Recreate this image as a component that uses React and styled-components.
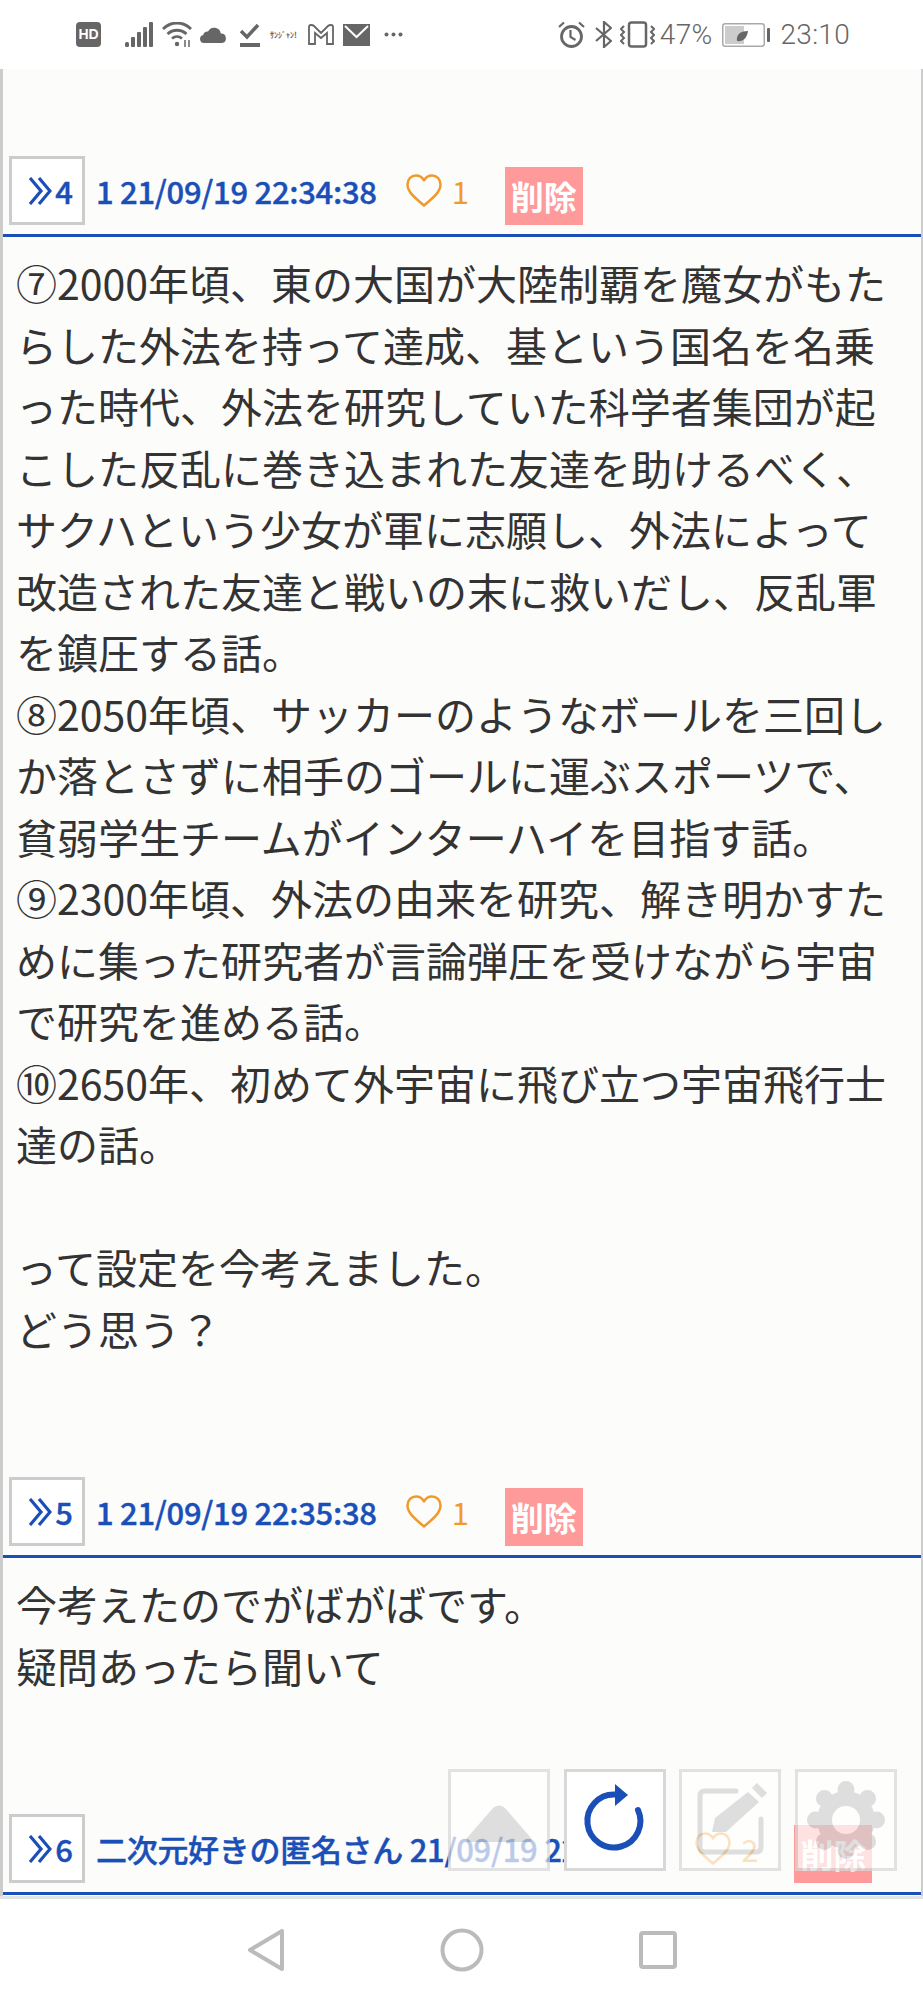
import React from "react";
import styled, { createGlobalStyle } from "styled-components";

const Blue = "#1a4fb8";
const Orange = "#f09a2c";
const Grey = "#d2d2d2";
const StatusInk = "#666";

const Global = createGlobalStyle`
  html, body { margin: 0; padding: 0; background: #fff; }
  * { box-sizing: border-box; }
`;

const Phone = styled.div`
  width: 923px;
  height: 2000px;
  display: flex;
  flex-direction: column;
  overflow: hidden;
  background: #fff;
  font-family: "Noto Sans CJK JP", "Noto Sans", sans-serif;
`;

const StatusBar = styled.div`
  height: 69px;
  flex: none;
  display: flex;
  align-items: center;
  justify-content: space-between;
  padding: 0 73px 0 76px;
  color: ${StatusInk};
`;

const StatusGroup = styled.div`
  display: flex;
  align-items: center;
`;

const StatusText = styled.span`
  margin-left: ${(p) => p.$ml || 0}px;
  font-family: Roboto, "Liberation Sans", sans-serif;
  font-weight: 300;
  font-size: 28px;
  line-height: 34px;
  letter-spacing: 0.3px;
`;

const TinyText = styled.span`
  width: 30px;
  margin-left: 10px;
  font-family: "Noto Sans CJK JP", sans-serif;
  font-size: 8px;
  font-weight: 700;
  white-space: nowrap;
  overflow: hidden;
`;

const HdBadge = styled.span`
  width: 25px;
  height: 25px;
  margin-right: 24px;
  border-radius: 4px;
  background: ${StatusInk};
  color: #fff;
  font-family: "Liberation Sans", sans-serif;
  font-size: 14px;
  font-weight: 700;
  line-height: 25px;
  text-align: center;
`;

const StatusSvg = styled.svg`
  flex: none;
  margin-left: ${(p) => p.$ml || 0}px;
`;

const Screen = styled.div`
  position: relative;
  flex: none;
  height: 1827px;
  overflow: hidden;
  padding-top: 87px;
  background: #fcfcfb;
  border-left: 3px solid #ccc;
  border-right: 2px solid #ccc;
`;

const PostHead = styled.div`
  height: 81px;
  display: flex;
  align-items: flex-start;
  padding-left: 6px;
  border-bottom: 3px solid ${Blue};
  white-space: nowrap;
  overflow: hidden;
`;

const AnchorBox = styled.div`
  width: 76px;
  height: 69px;
  flex: none;
  display: flex;
  align-items: center;
  justify-content: center;
  padding-left: 8px;
  border: 3px solid #ccc;
  background: #fff;
  color: ${Blue};
  font-size: 31px;
  font-weight: 500;
  -webkit-text-stroke: 0.4px ${Blue};
`;

const Chevrons = styled.svg`
  flex: none;
  margin-right: 3px;
`;

const Author = styled.span`
  margin-left: 11px;
  color: ${Blue};
  font-size: 31px;
  font-weight: 500;
  line-height: 69px;
  letter-spacing: -0.3px;
  -webkit-text-stroke: 0.4px ${Blue};
`;

const Like = styled.span`
  display: flex;
  align-items: center;
  height: 69px;
  margin-left: 29px;
  color: ${Orange};
  font-size: 31px;
  gap: 10px;
`;

const DeleteBadge = styled.span`
  width: 78px;
  height: 58px;
  margin: 11px 0 0 36px;
  flex: none;
  background: #fe9a9a;
  color: #fff;
  font-size: 33px;
  font-weight: 700;
  line-height: 58px;
  text-align: center;
`;

const PostBody = styled.div`
  padding: 15px 0 118px 13px;
  color: #333;
  font-size: 41px;
  line-height: 61.5px;
  white-space: nowrap;
`;

const Line = styled.div`
  min-height: 61.5px;
`;

const FloatBar = styled.div`
  position: absolute;
  right: 24px;
  bottom: 25px;
  display: flex;
  gap: 13.6px;
`;

const FloatButton = styled.button`
  width: 102px;
  height: 102px;
  padding: 0;
  display: flex;
  align-items: center;
  justify-content: center;
  border: 3px solid #d8d8d8;
  background: #fff;
  opacity: ${(p) => (p.$active ? 1 : 0.7)};
`;

const NavBar = styled.div`
  flex: 1;
  display: flex;
  align-items: center;
  justify-content: center;
  gap: 155px;
  border-top: 3px solid #dfe3e3;
`;

const SignalIcon = () => (
  <StatusSvg width="28" height="26" viewBox="0 0 28 26" fill={StatusInk}>
    <rect x="0" y="20" width="4" height="5" rx="1.500" />
    <rect x="6" y="15" width="4" height="10" rx="1" />
    <rect x="12" y="10" width="4" height="15" rx="1" />
    <rect x="18" y="5" width="4" height="20" rx="1" />
    <rect x="24" y="0" width="4" height="25" rx="1" />
  </StatusSvg>
);

const WifiIcon = () => (
  <StatusSvg $ml={9} width="30" height="26" viewBox="0 0 30 26" fill="none" stroke={StatusInk} strokeWidth="2.800">
    <path d="M1 7c8-8 20-8 28 0" />
    <path d="M5.500 12c5.500-5 13.500-5 19 0" />
    <path d="M10 16.500c3-2.500 7-2.500 10 0" />
    <circle cx="15" cy="22" r="2.200" fill={StatusInk} stroke="none" />
    <path d="M23 18v7M27 18v7" strokeWidth="1.500" />
  </StatusSvg>
);

const CloudIcon = () => (
  <StatusSvg $ml={8} width="27" height="17" viewBox="0 0 27 17" fill={StatusInk}>
    <path d="M4 17a4 4 0 0 1-.8-7.900A4.500 4.500 0 0 1 8 5.500 6.800 6.800 0 0 1 20.800 7.500 4.800 4.800 0 0 1 22 17z" />
  </StatusSvg>
);

const CheckIcon = () => (
  <StatusSvg $ml={13} width="20" height="24" viewBox="0 0 20 24" fill="none" stroke={StatusInk}>
    <path d="M1 8l6 6L18 2" strokeWidth="3.500" />
    <path d="M0 22h20" strokeWidth="4" />
  </StatusSvg>
);

const GmailIcon = () => (
  <StatusSvg $ml={8} width="26" height="21" viewBox="0 0 26 21" fill="none" stroke={StatusInk} strokeWidth="1.800">
    <path d="M1 20V3q0-2 2-2t3 1l7 7 7-7q1-1 3-1t2 2v17h-6V9l-6 5-6-5v11z" />
  </StatusSvg>
);

const MailIcon = () => (
  <StatusSvg $ml={9} width="27" height="22" viewBox="0 0 27 22">
    <rect width="27" height="22" fill={StatusInk} />
    <path d="M2 2l11.500 11L25 2" fill="none" stroke="#fff" strokeWidth="2" />
  </StatusSvg>
);

const DotsIcon = () => (
  <StatusSvg $ml={14} width="19" height="5" viewBox="0 0 19 5" fill={StatusInk}>
    <circle cx="2.500" cy="2.500" r="2" />
    <circle cx="9.500" cy="2.500" r="2" />
    <circle cx="16.500" cy="2.500" r="2" />
  </StatusSvg>
);

const AlarmIcon = () => (
  <StatusSvg width="27" height="27" viewBox="0 0 27 27" fill="none" stroke={StatusInk} strokeWidth="2.800">
    <circle cx="13.500" cy="15.500" r="10" />
    <path d="M12.500 9v7l5 3" strokeWidth="2.200" />
    <path d="M1 6l5-4.500M26 6l-5-4.500" strokeWidth="2.200" />
  </StatusSvg>
);

const BluetoothIcon = () => (
  <StatusSvg $ml={10} width="17" height="27" viewBox="0 0 17 27" fill="none" stroke={StatusInk} strokeWidth="2.200">
    <path d="M1 7l15 13-7 6V1l7 6L1 20" />
  </StatusSvg>
);

const VibrateIcon = () => (
  <StatusSvg $ml={8} width="35" height="27" viewBox="0 0 35 27" fill="none" stroke={StatusInk} strokeWidth="2">
    <rect x="9" y="1.500" width="17" height="24" rx="2.500" strokeWidth="2.500" />
    <path d="M4 5l-3 3 3 3-3 3 3 3-3 3 3 3M31 5l3 3-3 3 3 3-3 3 3 3-3 3" />
  </StatusSvg>
);

const BatteryIcon = () => (
  <StatusSvg $ml={10} width="48" height="24" viewBox="0 0 48 24">
    <rect x="0.750" y="0.750" width="41.500" height="22.500" rx="2.500" fill="#fff" stroke="#aaa" strokeWidth="1.500" />
    <rect x="3" y="3" width="19" height="18" fill="#ccc" />
    <rect x="45" y="5" width="3" height="14" rx="1" fill={StatusInk} />
    <path d="M15 18c-1-6 3-10 11-10-1 7-5 11-11 10z" fill={StatusInk} />
  </StatusSvg>
);

const HeartIcon = () => (
  <svg width="36" height="33" viewBox="0 0 36 33" fill="none" stroke={Orange} strokeWidth="2.500" strokeLinejoin="round">
    <path d="M18 31.500C9 24 1.500 18 1.500 10.500 1.500 5 5.500 1.500 10 1.500c3.500 0 6.500 2 8 5 1.500-3 4.500-5 8-5 4.500 0 8.500 3.500 8.500 9 0 7.500-7.500 13.500-16.500 21z" />
  </svg>
);

const ChevronsIcon = () => (
  <Chevrons width="23" height="28" viewBox="0 0 23 28" fill="none" stroke={Blue} strokeWidth="3.200">
    <path d="M1 1l11 13L1 27M10 1l11 13-11 13" />
  </Chevrons>
);

const UpIcon = () => (
  <svg width="96" height="96" viewBox="0 0 96 96" fill={Grey}>
    <path d="M42 36q6-5 12 0l26 30q2 4-3 4H19q-5 0-3-4z" />
  </svg>
);

const ReloadIcon = () => (
  <svg width="96" height="96" viewBox="0 0 96 96" fill="none" stroke={Blue} strokeWidth="6" strokeLinecap="round">
    <path d="M71 38A26.500 26.500 0 1 1 48 22.500" />
    <path d="M48 12l13 11-13 11z" fill={Blue} stroke="none" />
  </svg>
);

const EditIcon = () => (
  <svg width="96" height="96" viewBox="0 0 96 96" fill="none" stroke={Grey} strokeWidth="5" strokeLinecap="round">
    <path d="M54 19H23q-5 0-5 5v51q0 5 5 5h51q5 0 5-5V47" />
    <path d="M30 60l3-14 33-26 11 10-33 30z" fill={Grey} stroke="none" />
    <path d="M70 16l5-5 10 10-5 5z" fill={Grey} stroke="none" />
  </svg>
);

const GEAR_LOBES = [0, 45, 90, 135, 180, 225, 270, 315];

const GearIcon = () => (
  <svg width="96" height="96" viewBox="0 0 96 96" fill={Grey}>
    <circle cx="48" cy="48" r="29" />
    {GEAR_LOBES.map((deg) => (
      <circle key={deg} cx="48" cy="17.500" r="8.500" transform={`rotate(${deg} 48 48)`} />
    ))}
    <circle cx="48" cy="48" r="14" fill="#fff" />
  </svg>
);

const BackIcon = () => (
  <svg width="38" height="44" viewBox="0 0 38 44" fill="none" stroke="#bbb" strokeWidth="4" strokeLinejoin="round">
    <path d="M35 3v38L3 22z" />
  </svg>
);

const HomeIcon = () => (
  <svg width="44" height="44" viewBox="0 0 44 44" fill="none" stroke="#bbb" strokeWidth="4">
    <circle cx="22" cy="22" r="19.500" />
  </svg>
);

const SquareIcon = () => (
  <svg width="38" height="38" viewBox="0 0 38 38" fill="none" stroke="#bbb" strokeWidth="4" strokeLinejoin="round">
    <rect x="2" y="2" width="34" height="34" rx="2" />
  </svg>
);

const posts = [
  {
    no: 4,
    author: "1 21/09/19 22:34:38",
    likes: 1,
    lines: [
      "⑦2000年頃、東の大国が大陸制覇を魔女がもた",
      "らした外法を持って達成、基という国名を名乗",
      "った時代、外法を研究していた科学者集団が起",
      "こした反乱に巻き込まれた友達を助けるべく、",
      "サクハという少女が軍に志願し、外法によって",
      "改造された友達と戦いの末に救いだし、反乱軍",
      "を鎮圧する話。",
      "⑧2050年頃、サッカーのようなボールを三回し",
      "か落とさずに相手のゴールに運ぶスポーツで、",
      "貧弱学生チームがインターハイを目指す話。",
      "⑨2300年頃、外法の由来を研究、解き明かすた",
      "めに集った研究者が言論弾圧を受けながら宇宙",
      "で研究を進める話。",
      "⑩2650年、初めて外宇宙に飛び立つ宇宙飛行士",
      "達の話。",
      "",
      "って設定を今考えました。",
      "どう思う？",
    ],
  },
  {
    no: 5,
    author: "1 21/09/19 22:35:38",
    likes: 1,
    lines: ["今考えたのでがばがばです。", "疑問あったら聞いて"],
  },
  {
    no: 6,
    author: "二次元好きの匿名さん 21/09/19 22:36:38",
    likes: 2,
    lines: [],
  },
];

const Post = ({ no, author, likes, lines }) => (
  <>
    <PostHead>
      <AnchorBox>
        <ChevronsIcon />
        {no}
      </AnchorBox>
      <Author>{author}</Author>
      <Like>
        <HeartIcon />
        {likes}
      </Like>
      <DeleteBadge>削除</DeleteBadge>
    </PostHead>
    <PostBody>
      {lines.map((text, i) => (
        <Line key={i}>{text}</Line>
      ))}
    </PostBody>
  </>
);

export default function App() {
  return (
    <Phone>
      <Global />
      <StatusBar>
        <StatusGroup>
          <HdBadge>HD</HdBadge>
          <SignalIcon />
          <WifiIcon />
          <CloudIcon />
          <CheckIcon />
          <TinyText>ｻﾝｼﾞｬﾝ!</TinyText>
          <GmailIcon />
          <MailIcon />
          <DotsIcon />
        </StatusGroup>
        <StatusGroup>
          <AlarmIcon />
          <BluetoothIcon />
          <VibrateIcon />
          <StatusText $ml={5}>47%</StatusText>
          <BatteryIcon />
          <StatusText $ml={10}>23:10</StatusText>
        </StatusGroup>
      </StatusBar>
      <Screen>
        {posts.map((post) => (
          <Post key={post.no} {...post} />
        ))}
        <FloatBar>
          <FloatButton><UpIcon /></FloatButton>
          <FloatButton $active><ReloadIcon /></FloatButton>
          <FloatButton><EditIcon /></FloatButton>
          <FloatButton><GearIcon /></FloatButton>
        </FloatBar>
      </Screen>
      <NavBar>
        <BackIcon />
        <HomeIcon />
        <SquareIcon />
      </NavBar>
    </Phone>
  );
}
